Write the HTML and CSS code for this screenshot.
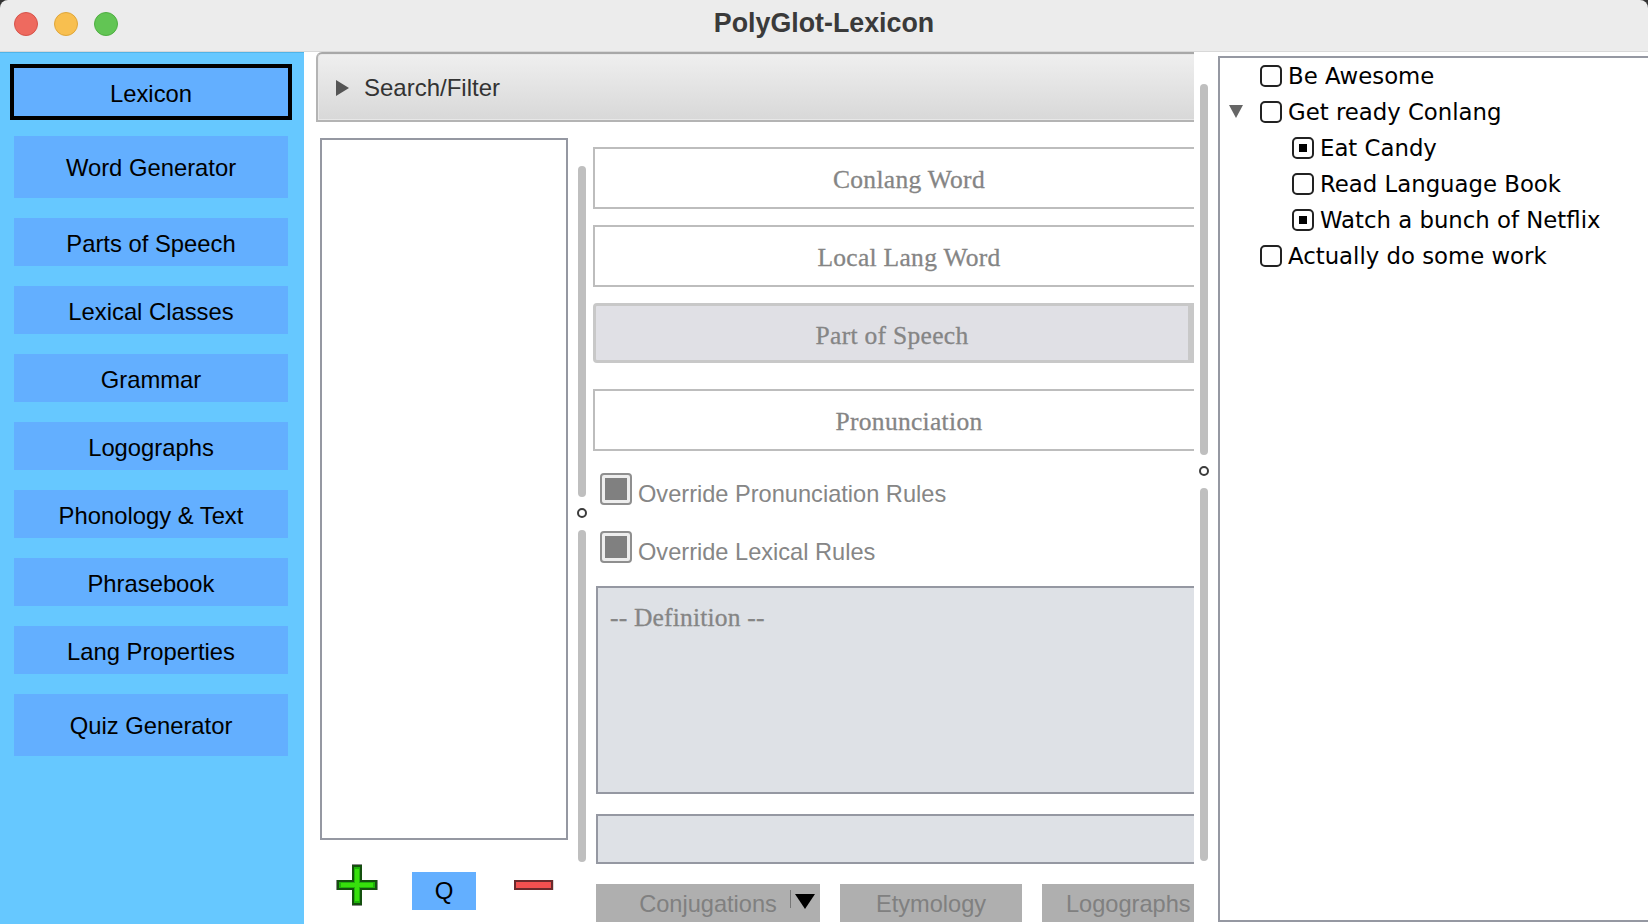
FILE: index.html
```html
<!DOCTYPE html>
<html lang="en">
<head>
    <meta charset="UTF-8">
    <title>PolyGlot-Lexicon</title>
    <link rel="stylesheet" href="styles.css">
</head>
<body>
    <div class="window">
        <header class="title-bar">
            <div class="lights">
                <span class="light red"></span>
                <span class="light yellow"></span>
                <span class="light green"></span>
            </div>
            <h1>PolyGlot-Lexicon</h1>
        </header>

        <div class="content">
            <nav class="side-nav">
                <a class="nav-btn active" href="#">Lexicon</a>
                <a class="nav-btn tall" href="#">Word Generator</a>
                <a class="nav-btn" href="#">Parts of Speech</a>
                <a class="nav-btn" href="#">Lexical Classes</a>
                <a class="nav-btn" href="#">Grammar</a>
                <a class="nav-btn" href="#">Logographs</a>
                <a class="nav-btn" href="#">Phonology &amp; Text</a>
                <a class="nav-btn" href="#">Phrasebook</a>
                <a class="nav-btn" href="#">Lang Properties</a>
                <a class="nav-btn tall" href="#">Quiz Generator</a>
            </nav>

            <main class="center">
                <div class="search-bar">
                    <svg class="disclosure" width="13" height="16" viewBox="0 0 13 16"><path d="M0 0L13 8L0 16Z" fill="#555"/></svg>
                    <span>Search/Filter</span>
                </div>

                <div class="center-row">
                    <div class="list-col">
                        <div class="word-list"></div>
                        <div class="list-actions">
                            <svg class="icon-plus" width="42" height="42" viewBox="0 0 42 42">
                                <path d="M16 0H26V16H42V26H26V42H16V26H0V16H16Z" fill="#8a8a8a"/>
                                <path d="M17 2H25V17H40V25H25V40H17V25H2V17H17Z" fill="#1fb30a" stroke="#14500e" stroke-width="2"/>
                                <path d="M21 5V37M5 21H37" stroke="#37e00c" stroke-width="4"/>
                            </svg>
                            <button class="q-btn" type="button">Q</button>
                            <svg class="icon-minus" width="40" height="10" viewBox="0 0 40 10">
                                <rect x="0" y="0" width="40" height="10" fill="#d8d8d8"/>
                                <rect x="1" y="1" width="37" height="8" fill="#f25050" stroke="#6a2a2c" stroke-width="2"/>
                            </svg>
                        </div>
                    </div>

                    <div class="split split-inner">
                        <span class="grip grip-top"></span>
                        <span class="knob"></span>
                        <span class="grip grip-bottom"></span>
                    </div>

                    <div class="form-col">
                        <div class="field">Conlang Word</div>
                        <div class="field">Local Lang Word</div>
                        <div class="field field-combo">Part of Speech</div>
                        <div class="field">Pronunciation</div>

                        <label class="check-row row-one"><span class="check-box"><span></span></span><span class="check-text">Override Pronunciation Rules</span></label>
                        <label class="check-row row-two"><span class="check-box"><span></span></span><span class="check-text">Override Lexical Rules</span></label>

                        <div class="definition">-- Definition --</div>
                        <div class="notes"></div>

                        <div class="tabs">
                            <button class="tab tab-conj" type="button">Conjugations<i class="tick"></i><svg width="20" height="15" viewBox="0 0 20 15"><path d="M0 0H20L10 15Z" fill="#000"/></svg></button>
                            <button class="tab tab-ety" type="button">Etymology</button>
                            <button class="tab tab-logo" type="button">Logographs</button>
                        </div>
                    </div>
                </div>
            </main>

            <div class="split split-outer">
                <span class="grip grip-top"></span>
                <span class="knob"></span>
                <span class="grip grip-bottom"></span>
            </div>

            <aside class="todo-tree">
                <div class="todo l0"><span class="box"></span>Be Awesome</div>
                <div class="todo l0"><svg class="open" width="14" height="13" viewBox="0 0 14 13"><path d="M0 0H14L7 13Z" fill="#666"/></svg><span class="box"></span>Get ready Conlang</div>
                <div class="todo l1"><span class="box on"></span>Eat Candy</div>
                <div class="todo l1"><span class="box"></span>Read Language Book</div>
                <div class="todo l1"><span class="box on"></span>Watch a bunch of Netflix</div>
                <div class="todo l0"><span class="box"></span>Actually do some work</div>
            </aside>
        </div>
    </div>
</body>
</html>
```

FILE: styles.css
```css
* {
    box-sizing: border-box;
}

html, body {
    margin: 0;
    padding: 0;
    height: 100%;
    overflow: hidden;
}

body {
    font-family: "Liberation Sans", Arial, sans-serif;
    background-color: #333;
    color: #000;
}

.window {
    display: flex;
    flex-direction: column;
    width: 1648px;
    height: 924px;
}

/* title bar */
.title-bar {
    position: relative;
    flex: 0 0 52px;
    display: flex;
    align-items: center;
    justify-content: center;
    background-color: #ececec;
    border-bottom: 1px solid #d8d8d8;
    border-radius: 8px 8px 0 0;
}

.title-bar h1 {
    margin: 0 0 5px;
    font-size: 26.8px;
    font-weight: bold;
    color: #3a3a3a;
}

.lights {
    position: absolute;
    left: 14px;
    top: 12px;
    display: flex;
    gap: 16px;
}

.light {
    width: 24px;
    height: 24px;
    border-radius: 50%;
}

.light.red { background-color: #ee6a5f; border: 1px solid #d6534a; }
.light.yellow { background-color: #f8bf4f; border: 1px solid #dfa63a; }
.light.green { background-color: #62c554; border: 1px solid #4fae42; }

.content {
    flex: 1;
    display: flex;
    min-height: 0;
    background-color: #fff;
}

/* left nav */
.side-nav {
    flex: 0 0 304px;
    display: flex;
    flex-direction: column;
    align-items: center;
    padding: 11px 2px 0 0;
    background-color: #66c8ff;
    border-top: 1px solid #4fb4e8;
}

.nav-btn {
    width: 274px;
    height: 48px;
    margin-bottom: 20px;
    padding-top: 4px;
    display: flex;
    align-items: center;
    justify-content: center;
    background-color: #63afff;
    color: #000;
    text-decoration: none;
    font-size: 23.8px;
}

.nav-btn.tall {
    height: 62px;
    padding-top: 2px;
}

.nav-btn.active {
    width: 282px;
    height: 56px;
    margin-bottom: 16px;
    padding-top: 4px;
    border: 4px solid #000;
}

/* middle area */
.center {
    flex: 0 0 890px;
    overflow: hidden;
    padding-left: 12px;
}

.search-bar {
    width: 900px;
    height: 70px;
    display: flex;
    align-items: center;
    gap: 15px;
    padding: 2px 0 0 18px;
    border: 2px solid #b4b4b4;
    border-top-color: #a8a8a8;
    border-top-left-radius: 6px;
    background: linear-gradient(#efefef, #d8d8d8);
    box-shadow: inset 0 0 0 1px #e8e8e8;
    font-size: 24px;
    color: #333;
}

.center-row {
    display: flex;
    height: 802px;
}

.list-col {
    flex: 0 0 256px;
    padding: 16px 0 0 4px;
}

.word-list {
    width: 248px;
    height: 702px;
    background-color: #fff;
    border: 2px solid #9598a2;
}

.list-actions {
    display: flex;
    align-items: flex-start;
    height: 60px;
    padding: 24px 0 0 16px;
}

.icon-plus {
    margin-right: 34px;
}

.q-btn {
    width: 64px;
    height: 38px;
    margin-top: 8px;
    margin-right: 38px;
    padding: 0;
    border: none;
    background-color: #63afff;
    font-family: inherit;
    font-size: 24px;
    color: #000;
}

.icon-minus {
    margin-top: 16px;
}

/* splitters */
.split {
    display: flex;
    flex-direction: column;
    align-items: center;
}

.split-inner {
    flex: 0 0 21px;
    padding: 44px 6px 0 5px;
}

.split-inner .grip-top { height: 331px; }
.split-inner .grip-bottom { height: 332px; }

.split-outer {
    flex: 0 0 10px;
    margin: 0 9px 0 5px;
    padding-top: 32px;
}

.split-outer .grip-top { height: 371px; }
.split-outer .grip-bottom { height: 373px; }

.grip {
    display: block;
    width: 8px;
    flex: none;
    border-radius: 4px;
    background-color: #bfbfbf;
}

.knob {
    display: block;
    flex: none;
    width: 10px;
    height: 10px;
    margin: 11px 0 12px;
    border: 2px solid #3c3c3c;
    border-radius: 50%;
}

/* form column */
.form-col {
    flex: 0 0 640px;
    padding-top: 25px;
}

.field {
    width: 632px;
    height: 62px;
    margin-bottom: 16px;
    padding-top: 3px;
    display: flex;
    align-items: center;
    justify-content: center;
    border: 2px solid #bdbdbd;
    background-color: #fff;
    font-family: "Liberation Serif", serif;
    font-size: 25.5px;
    letter-spacing: 0.3px;
    -webkit-text-stroke: 0.3px #858585;
    color: #858585;
}

.field-combo {
    width: 601px;
    height: 60px;
    margin-bottom: 26px;
    padding-top: 5px;
    border-color: #c8c8c8;
    border-width: 3px;
    border-right-width: 6px;
    border-radius: 4px 0 0 4px;
    background-color: #e0e0e5;
}

.check-row {
    display: flex;
    align-items: flex-start;
    gap: 6px;
    height: 32px;
    margin-left: 7px;
    font-size: 23.6px;
    color: #868686;
}

.check-text {
    margin-top: 8px;
    white-space: nowrap;
}

.row-one {
    margin-top: 22px;
}

.row-two {
    margin-top: 26px;
}

.check-box {
    flex: none;
    width: 32px;
    height: 32px;
    padding: 3px;
    border: 2px solid #8f8f8f;
    border-radius: 4px;
    background-color: #eee;
}

.check-box span {
    display: block;
    width: 100%;
    height: 100%;
    background-color: #808080;
}

.definition {
    width: 640px;
    height: 208px;
    margin: 23px 0 0 3px;
    padding: 15px 12px;
    background-color: #dee1e6;
    border: 2px solid #9598a2;
    font-family: "Liberation Serif", serif;
    font-size: 25.5px;
    letter-spacing: 0.2px;
    -webkit-text-stroke: 0.3px #858585;
    color: #858585;
}

.notes {
    width: 640px;
    height: 50px;
    margin: 20px 0 0 3px;
    background-color: #dee1e6;
    border: 2px solid #9598a2;
}

.tabs {
    display: flex;
    gap: 20px;
    margin: 20px 0 0 3px;
    width: 640px;
}

.tab {
    position: relative;
    flex: none;
    height: 38px;
    padding: 2px 0 0;
    border: none;
    background-color: #afafaf;
    font-family: inherit;
    font-size: 23.6px;
    color: #808080;
}

.tab-conj {
    width: 224px;
}

.tab-conj svg {
    position: absolute;
    right: 5px;
    top: 10px;
}

.tick {
    position: absolute;
    right: 29px;
    top: 6px;
    width: 1px;
    height: 18px;
    background-color: #777;
}

.tab-ety { width: 182px; }
.tab-logo { width: 152px; padding-left: 24px; text-align: left; white-space: nowrap; }

/* todo tree on the right */
.todo-tree {
    flex: 0 0 432px;
    height: 866px;
    margin-top: 4px;
    border: 2px solid #9598a2;
    border-right: none;
    background-color: #fff;
    font-family: "DejaVu Sans", sans-serif;
    font-size: 22.8px;
}

.todo {
    position: relative;
    display: flex;
    align-items: center;
    height: 36px;
    gap: 6px;
}

.todo.l0 { padding-left: 40px; }
.todo.l1 { padding-left: 72px; }

.open {
    position: absolute;
    left: 9px;
    top: 11px;
}

.box {
    flex: none;
    width: 22px;
    height: 22px;
    border: 2px solid #222;
    border-radius: 5px;
    display: flex;
    align-items: center;
    justify-content: center;
}

.box.on::after {
    content: "";
    width: 8px;
    height: 8px;
    background-color: #000;
}
```
